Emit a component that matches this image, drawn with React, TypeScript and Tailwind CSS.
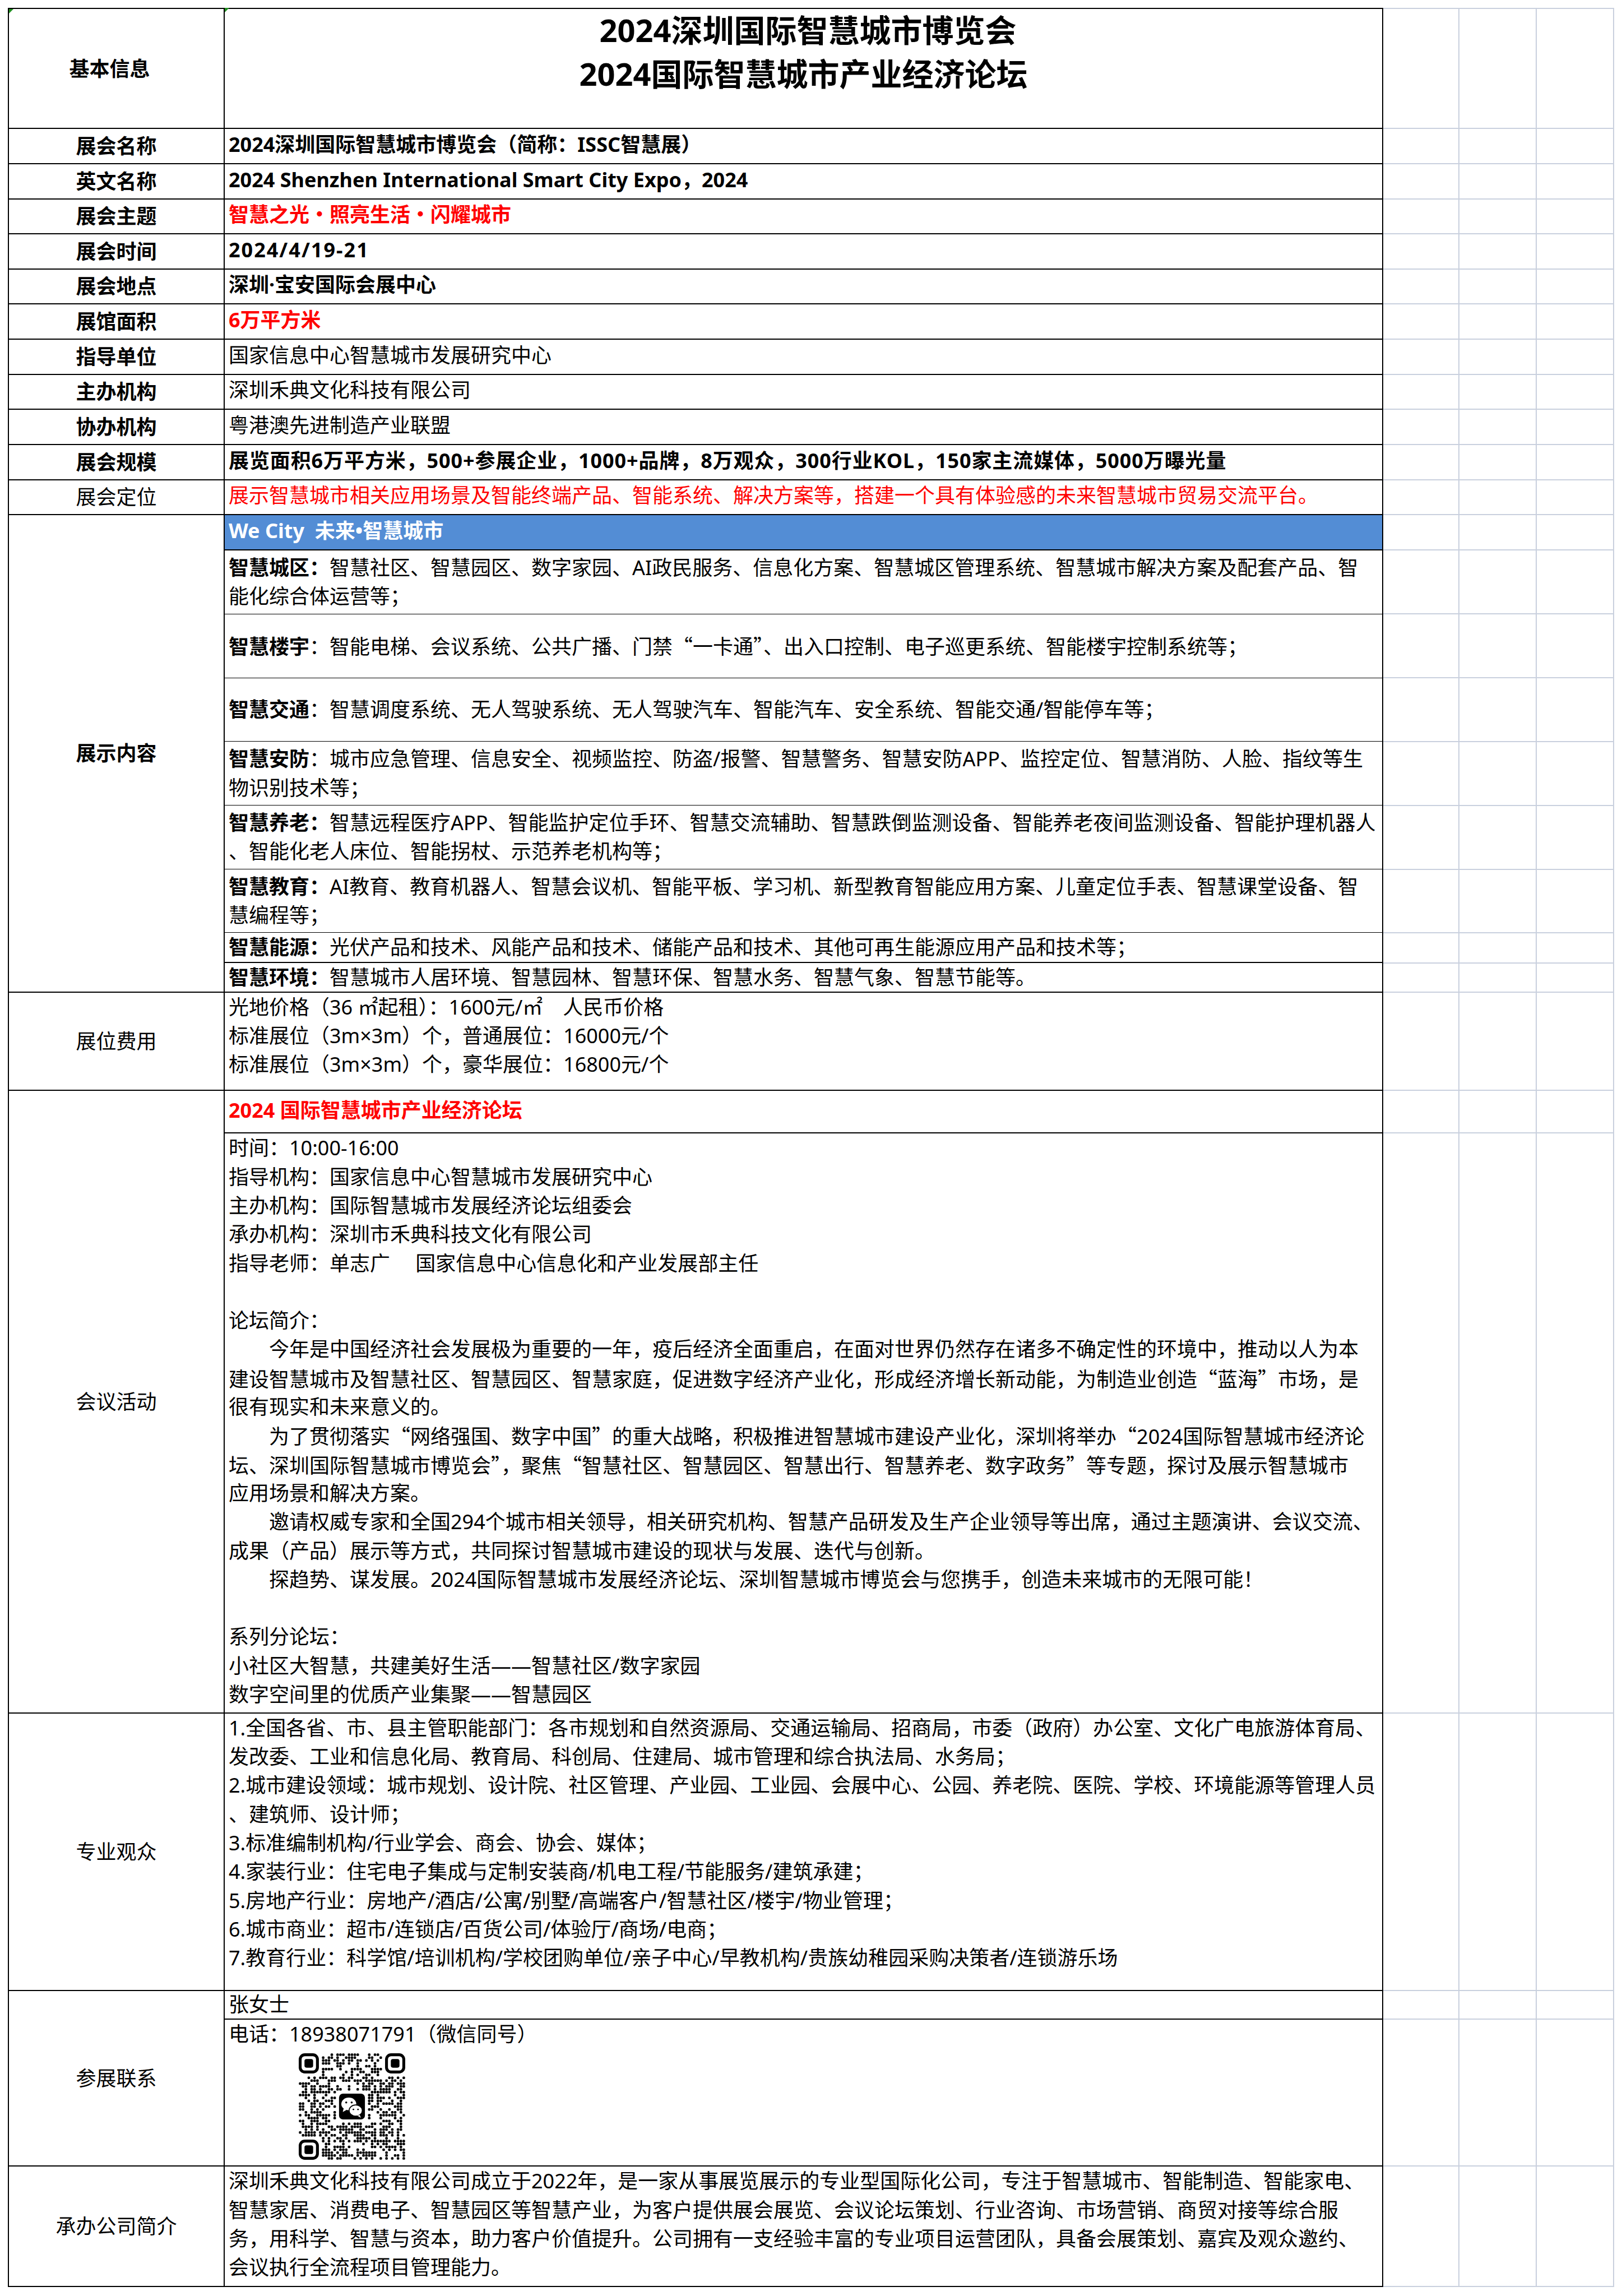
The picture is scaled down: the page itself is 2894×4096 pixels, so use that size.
import React from 'react';

const FONT = "font-['Noto_Sans','Noto_Sans_CJK_SC',sans-serif]";

// row heights of the light sheet grid to the right of the table
const GRID_ROWS = [
  'h-[214.3px]',
  'h-[62.63px]', 'h-[62.63px]', 'h-[62.63px]', 'h-[62.63px]', 'h-[62.63px]', 'h-[62.63px]',
  'h-[62.63px]', 'h-[62.63px]', 'h-[62.63px]', 'h-[62.63px]', 'h-[62.63px]', 'h-[62.63px]',
  'h-[114.3px]', 'h-[113.9px]', 'h-[113.9px]', 'h-[113.9px]', 'h-[113.9px]', 'h-[113.8px]',
  'h-[53.2px]', 'h-[52.2px]',
  'h-[175.6px]', 'h-[75.9px]', 'h-[1034.4px]', 'h-[495.4px]', 'h-[51.2px]', 'h-[261.9px]',
  'h-[214.5px]',
];

type Cell = [number, number];

function buildQr(): Cell[] {
  let seed = 18938071;
  const rnd = () => {
    seed = (Math.imul(seed, 1664525) + 1013904223) >>> 0;
    return seed / 4294967296;
  };
  const cells: Cell[] = [];
  for (let y = 0; y < 37; y++) {
    for (let x = 0; x < 37; x++) {
      const finder = (x < 8 && y < 8) || (x > 28 && y < 8) || (x < 8 && y > 28);
      const logo = x >= 13 && x <= 23 && y >= 13 && y <= 23;
      if (finder || logo) continue;
      if (rnd() < 0.5) cells.push([x, y]);
    }
  }
  return cells;
}

const QR_CELLS = buildQr();

function QrCode() {
  return (
    <svg width="190" height="190" viewBox="0 0 37 37">
      {QR_CELLS.map(([x, y]) => (
        <rect key={`${x}-${y}`} x={x + 0.06} y={y + 0.06} width="0.88" height="0.88" rx="0.3" fill="#000" />
      ))}
      {[
        [0, 0],
        [30, 0],
        [0, 30],
      ].map(([cx, cy]) => (
        <g key={`f${cx}${cy}`}>
          <rect x={cx + 0.5} y={cy + 0.5} width="6" height="6" rx="1.6" fill="none" stroke="#000" strokeWidth="1" />
          <rect x={cx + 2} y={cy + 2} width="3" height="3" rx="0.7" fill="#000" />
        </g>
      ))}
      <rect x="14" y="14" width="9" height="9" rx="1.4" fill="#000" />
      <ellipse cx="17.4" cy="17.6" rx="2.6" ry="2.2" fill="#fff" />
      <path d="M15.6 19.2 L15.3 20.4 L16.7 19.6 Z" fill="#fff" />
      <ellipse cx="19.8" cy="19.9" rx="2.3" ry="1.95" fill="#fff" stroke="#000" strokeWidth="0.35" />
      <path d="M21.2 21.4 L21.6 22.4 L20.4 21.7 Z" fill="#fff" />
      <circle cx="16.5" cy="17.1" r="0.35" fill="#000" />
      <circle cx="18.4" cy="17.1" r="0.35" fill="#000" />
      <circle cx="19.0" cy="19.5" r="0.28" fill="#000" />
      <circle cx="20.6" cy="19.5" r="0.28" fill="#000" />
    </svg>
  );
}

// curly quotes are full width in the sheet, so take them from the CJK face
function withQuotes(text: string) {
  return text.split(/([“”])/).map((part, i) =>
    part === '“' || part === '”' ? (
      <span key={i} className="font-['Noto_Sans_CJK_SC',sans-serif]">
        {part}
      </span>
    ) : (
      <React.Fragment key={i}>{part}</React.Fragment>
    ),
  );
}

function GreenMark() {
  return (
    <div className="absolute left-0 top-0 h-0 w-0 border-t-[8px] border-r-[8px] border-t-[#1f8f1f] border-r-transparent" />
  );
}

function Label({ children, bold = true, extra = '' }: { children: React.ReactNode; bold?: boolean; extra?: string }) {
  return (
    <div
      className={`w-[385px] shrink-0 border-r-2 border-black flex items-center justify-center text-[36px] leading-[51.3px] ${
        bold ? 'font-bold' : 'font-normal'
      } ${extra}`}
    >
      {children}
    </div>
  );
}

function SimpleRow({
  label,
  labelBold = true,
  children,
  tone = 'font-bold text-black',
}: {
  label: string;
  labelBold?: boolean;
  children: React.ReactNode;
  tone?: string;
}) {
  return (
    <div className="flex h-[62.63px] border-b-2 border-black">
      <Label bold={labelBold}>{label}</Label>
      <div className={`flex-1 min-w-0 flex items-center pl-[7px] pb-[6px] whitespace-nowrap text-[36px] leading-[51.3px] ${tone}`}>
        {children}
      </div>
    </div>
  );
}

function Sub({ h, line, children }: { h: string; line: string; children: React.ReactNode }) {
  return (
    <div className={`${h} ${line} border-black flex flex-col justify-center pl-[7px] text-[36px] leading-[51.3px] whitespace-nowrap`}>
      {children}
    </div>
  );
}

function Lines({ items }: { items: string[] }) {
  return (
    <>
      {items.map((t, i) => (
        <div key={i} className="h-[51.3px] whitespace-pre">
          {t === '' ? '\u00a0' : withQuotes(t)}
        </div>
      ))}
    </>
  );
}

const FORUM = [
  '时间：10:00-16:00',
  '指导机构：国家信息中心智慧城市发展研究中心',
  '主办机构：国际智慧城市发展经济论坛组委会',
  '承办机构：深圳市禾典科技文化有限公司',
  '指导老师：单志广　 国家信息中心信息化和产业发展部主任',
  '',
  '论坛简介：',
  '　　今年是中国经济社会发展极为重要的一年，疫后经济全面重启，在面对世界仍然存在诸多不确定性的环境中，推动以人为本',
  '建设智慧城市及智慧社区、智慧园区、智慧家庭，促进数字经济产业化，形成经济增长新动能，为制造业创造“蓝海”市场，是',
  '很有现实和未来意义的。',
  '　　为了贯彻落实“网络强国、数字中国”的重大战略，积极推进智慧城市建设产业化，深圳将举办“2024国际智慧城市经济论',
  '坛、深圳国际智慧城市博览会”，聚焦“智慧社区、智慧园区、智慧出行、智慧养老、数字政务”等专题，探讨及展示智慧城市',
  '应用场景和解决方案。',
  '　　邀请权威专家和全国294个城市相关领导，相关研究机构、智慧产品研发及生产企业领导等出席，通过主题演讲、会议交流、',
  '成果（产品）展示等方式，共同探讨智慧城市建设的现状与发展、迭代与创新。',
  '　　探趋势、谋发展。2024国际智慧城市发展经济论坛、深圳智慧城市博览会与您携手，创造未来城市的无限可能！',
  '',
  '系列分论坛：',
  '小社区大智慧，共建美好生活——智慧社区/数字家园',
  '数字空间里的优质产业集聚——智慧园区',
];

const AUDIENCE = [
  '1.全国各省、市、县主管职能部门：各市规划和自然资源局、交通运输局、招商局，市委（政府）办公室、文化广电旅游体育局、',
  '发改委、工业和信息化局、教育局、科创局、住建局、城市管理和综合执法局、水务局；',
  '2.城市建设领域：城市规划、设计院、社区管理、产业园、工业园、会展中心、公园、养老院、医院、学校、环境能源等管理人员',
  '、建筑师、设计师；',
  '3.标准编制机构/行业学会、商会、协会、媒体；',
  '4.家装行业：住宅电子集成与定制安装商/机电工程/节能服务/建筑承建；',
  '5.房地产行业：房地产/酒店/公寓/别墅/高端客户/智慧社区/楼宇/物业管理；',
  '6.城市商业：超市/连锁店/百货公司/体验厅/商场/电商；',
  '7.教育行业：科学馆/培训机构/学校团购单位/亲子中心/早教机构/贵族幼稚园采购决策者/连锁游乐场',
];

const COMPANY = [
  '深圳禾典文化科技有限公司成立于2022年，是一家从事展览展示的专业型国际化公司，专注于智慧城市、智能制造、智能家电、',
  '智慧家居、消费电子、智慧园区等智慧产业，为客户提供展会展览、会议论坛策划、行业咨询、市场营销、商贸对接等综合服',
  '务，用科学、智慧与资本，助力客户价值提升。公司拥有一支经验丰富的专业项目运营团队，具备会展策划、嘉宾及观众邀约、',
  '会议执行全流程项目管理能力。',
];

export default function App() {
  return (
    <div className={`w-[2894px] h-[4096px] bg-white text-black ${FONT}`}>
      <div className="flex items-start pt-[14px] pl-[14px]">
        {/* Table */}
        <div className="w-[2454px] flex flex-col border-t-2 border-l-2 border-r-2 border-black">
          {/* Header */}
          <div className="flex h-[214.3px] border-b-2 border-black">
            <Label extra="relative pr-[24px]">
              <GreenMark />
              基本信息
            </Label>
            <div className="relative flex-1 flex flex-col items-center -mt-[2px] text-[56px] leading-[78.3px] font-bold whitespace-nowrap">
              <GreenMark />
              <div className="pl-[16px]">2024深圳国际智慧城市博览会</div>
              <div>2024国际智慧城市产业经济论坛</div>
            </div>
          </div>

          <SimpleRow label="展会名称">2024深圳国际智慧城市博览会（简称：ISSC智慧展）</SimpleRow>
          <SimpleRow label="英文名称">2024 Shenzhen International Smart City Expo，2024</SimpleRow>
          <SimpleRow label="展会主题" tone="font-bold text-[#ff0000]">
            智慧之光・照亮生活・闪耀城市
          </SimpleRow>
          <SimpleRow label="展会时间" tone="font-bold text-black tracking-[2px]">
            2024/4/19-21
          </SimpleRow>
          <SimpleRow label="展会地点">深圳·宝安国际会展中心</SimpleRow>
          <SimpleRow label="展馆面积" tone="font-bold text-[#ff0000]">
            6万平方米
          </SimpleRow>
          <SimpleRow label="指导单位" tone="font-normal">
            国家信息中心智慧城市发展研究中心
          </SimpleRow>
          <SimpleRow label="主办机构" tone="font-normal">
            深圳禾典文化科技有限公司
          </SimpleRow>
          <SimpleRow label="协办机构" tone="font-normal">
            粤港澳先进制造产业联盟
          </SimpleRow>
          <SimpleRow label="展会规模" tone="font-bold text-black tracking-[0.9px]">
            展览面积6万平方米，500+参展企业，1000+品牌，8万观众，300行业KOL，150家主流媒体，5000万曝光量
          </SimpleRow>
          <SimpleRow label="展会定位" labelBold={false} tone="font-normal text-[#ff0000]">
            展示智慧城市相关应用场景及智能终端产品、智能系统、解决方案等，搭建一个具有体验感的未来智慧城市贸易交流平台。
          </SimpleRow>

          {/* 展示内容 */}
          <div className="flex h-[851.7px] border-b-2 border-black">
            <Label>展示内容</Label>
            <div className="flex-1 min-w-0 flex flex-col">
              <div className="h-[62.63px] border-b-2 border-black bg-[#538dd5] text-white font-bold flex items-center pl-[7px] pb-[4px] text-[36px] whitespace-pre">
                We City  未来•智慧城市
              </div>
              <Sub h="h-[114.3px]" line="border-b">
                <div>
                  <span className="font-bold">智慧城区：</span>
                  智慧社区、智慧园区、数字家园、AI政民服务、信息化方案、智慧城区管理系统、智慧城市解决方案及配套产品、智
                </div>
                <div>能化综合体运营等；</div>
              </Sub>
              <Sub h="h-[113.9px]" line="border-b">
                <div>
                  <span className="font-bold">智慧楼宇</span>
                  {withQuotes('：智能电梯、会议系统、公共广播、门禁“一卡通”、出入口控制、电子巡更系统、智能楼宇控制系统等；')}
                </div>
              </Sub>
              <Sub h="h-[113.9px]" line="border-b">
                <div>
                  <span className="font-bold">智慧交通</span>：智慧调度系统、无人驾驶系统、无人驾驶汽车、智能汽车、安全系统、智能交通/智能停车等；
                </div>
              </Sub>
              <Sub h="h-[113.9px]" line="border-b">
                <div>
                  <span className="font-bold">智慧安防</span>：城市应急管理、信息安全、视频监控、防盗/报警、智慧警务、智慧安防APP、监控定位、智慧消防、人脸、指纹等生
                </div>
                <div>物识别技术等；</div>
              </Sub>
              <Sub h="h-[113.9px]" line="border-b">
                <div>
                  <span className="font-bold">智慧养老：</span>
                  智慧远程医疗APP、智能监护定位手环、智慧交流辅助、智慧跌倒监测设备、智能养老夜间监测设备、智能护理机器人
                </div>
                <div>、智能化老人床位、智能拐杖、示范养老机构等；</div>
              </Sub>
              <Sub h="h-[113.8px]" line="border-b">
                <div>
                  <span className="font-bold">智慧教育：</span>
                  AI教育、教育机器人、智慧会议机、智能平板、学习机、新型教育智能应用方案、儿童定位手表、智慧课堂设备、智
                </div>
                <div>慧编程等；</div>
              </Sub>
              <Sub h="h-[53.2px]" line="border-b-2">
                <div>
                  <span className="font-bold">智慧能源：</span>
                  光伏产品和技术、风能产品和技术、储能产品和技术、其他可再生能源应用产品和技术等；
                </div>
              </Sub>
              <Sub h="flex-1" line="">
                <div>
                  <span className="font-bold">智慧环境：</span>
                  智慧城市人居环境、智慧园林、智慧环保、智慧水务、智慧气象、智慧节能等。
                </div>
              </Sub>
            </div>
          </div>

          {/* 展位费用 */}
          <div className="flex h-[175.6px] border-b-2 border-black">
            <Label bold={false}>展位费用</Label>
            <div className="flex-1 min-w-0 pl-[7px] text-[36px] leading-[51.3px]">
              <Lines
                items={[
                  '光地价格（36 ㎡起租）：1600元/㎡　人民币价格',
                  '标准展位（3m×3m）个，普通展位：16000元/个',
                  '标准展位（3m×3m）个，豪华展位：16800元/个',
                ]}
              />
            </div>
          </div>

          {/* 会议活动 */}
          <div className="flex h-[1110.3px] border-b-2 border-black">
            <Label bold={false}>会议活动</Label>
            <div className="flex-1 min-w-0 flex flex-col">
              <div className="h-[75.9px] border-b-2 border-black flex items-center pl-[7px] pb-[4px] text-[36px] font-bold text-[#ff0000] whitespace-pre">
                2024 国际智慧城市产业经济论坛
              </div>
              <div className="flex-1 pl-[7px] text-[36px] leading-[51.3px]">
                <Lines items={FORUM} />
              </div>
            </div>
          </div>

          {/* 专业观众 */}
          <div className="flex h-[495.4px] border-b-2 border-black">
            <Label bold={false}>专业观众</Label>
            <div className="flex-1 min-w-0 pl-[7px] text-[36px] leading-[51.3px]">
              <Lines items={AUDIENCE} />
            </div>
          </div>

          {/* 参展联系 */}
          <div className="flex h-[313.1px] border-b-2 border-black">
            <Label bold={false}>参展联系</Label>
            <div className="flex-1 min-w-0 flex flex-col">
              <div className="h-[51.2px] border-b-2 border-black flex items-center pl-[7px] pb-[2px] text-[36px]">
                张女士
              </div>
              <div className="flex-1 pl-[7px] text-[36px] leading-[51.3px]">
                <div className="h-[51.3px]">电话：18938071791（微信同号）</div>
                <div className="ml-[125px] mt-[8px] w-[190px] h-[190px]">
                  <QrCode />
                </div>
              </div>
            </div>
          </div>

          {/* 承办公司简介 */}
          <div className="flex h-[214.5px] border-b-2 border-black">
            <Label bold={false}>承办公司简介</Label>
            <div className="flex-1 min-w-0 pl-[7px] text-[36px] leading-[51.3px]">
              <Lines items={COMPANY} />
            </div>
          </div>
        </div>

        {/* Sheet gridlines beside the table */}
        <div className="w-[412px] flex flex-col border-t-2 border-[#c9d0de]">
          {GRID_ROWS.map((h, i) => (
            <div key={i} className={`${h} flex border-b-2 border-[#c9d0de]`}>
              <div className="w-[136px] border-r-2 border-[#c9d0de]" />
              <div className="w-[138px] border-r-2 border-[#c9d0de]" />
              <div className="w-[138px] border-r-2 border-[#c9d0de]" />
            </div>
          ))}
        </div>
      </div>
    </div>
  );
}
